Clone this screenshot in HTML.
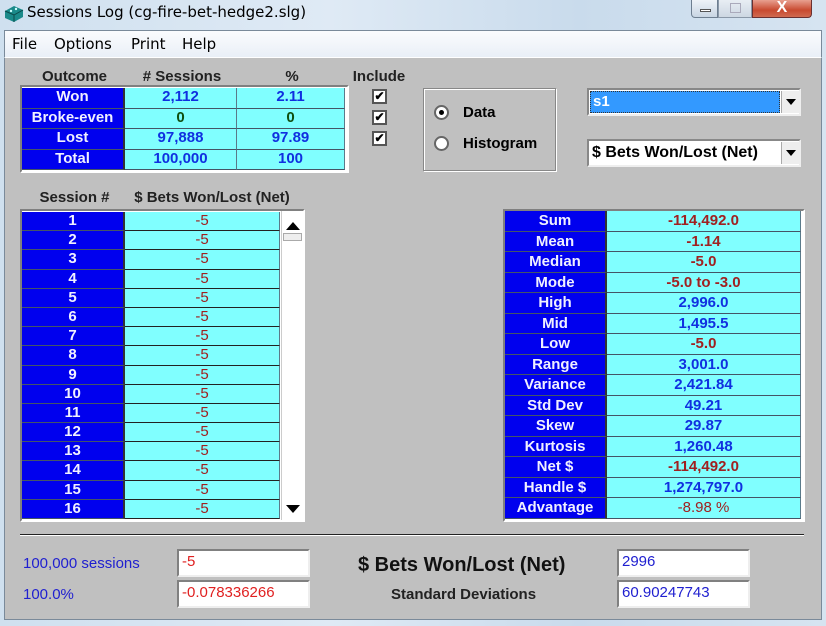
<!DOCTYPE html>
<html><head><meta charset="utf-8"><style>
*{margin:0;padding:0;box-sizing:border-box}
body{width:826px;height:626px;overflow:hidden;background:linear-gradient(90deg,#cfe0ef,#dfeaf5 40%,#c9dbec 70%,#d6e4f1);font-family:"Liberation Sans",Arial,sans-serif;position:relative}
.a{position:absolute}
.title{left:27px;top:3px;color:#000;font-family:"DejaVu Sans","Liberation Sans",sans-serif;font-size:15px}
.menu{left:4px;top:30px;width:818px;height:27px;background:linear-gradient(#fbfcfe,#e9eff7);border:1px solid #7a8a9a;border-bottom:none}
.menu span{position:absolute;top:4px;font-family:"DejaVu Sans","Liberation Sans",sans-serif;font-size:15px}
.content{left:4px;top:57px;width:818px;height:563px;background:#c0c0c0;border:1px solid #7a8a9a;border-top:1px solid #fff}
.b{font-weight:bold;font-size:15px}
.hdr{font-weight:bold;font-size:15px;color:#222;text-align:center}
.tbl{background:#fff;border:2px solid #808080;border-right-color:#fff;border-bottom-color:#fff}
.row{position:absolute;left:0;display:flex}
.lab{background:#0000ee;color:#f0f0ff;text-align:center;font-weight:bold;font-size:15px;border-right:2px solid #333;border-bottom:1px solid #445566}
.val{background:#80ffff;text-align:center;font-weight:bold;font-size:15px;border-bottom:1px solid #445566;border-right:1px solid #5a7a8a}
.s .val{border-bottom:1px solid #222}
.blue{color:#1030e0}.red{color:#a02020}.grn{color:#105010}
.cb{width:15px;height:15px;background:#fff;border:2px solid #555;font-size:12px;line-height:11px;text-align:center;font-weight:bold}
.inp{background:#fff;border:2px solid #808080;border-right-color:#eee;border-bottom-color:#eee;font-size:15px;padding:2px 3px}
.up{width:0;height:0;border-left:7px solid transparent;border-right:7px solid transparent;border-bottom:8px solid #000}
.dn{width:0;height:0;border-left:7px solid transparent;border-right:7px solid transparent;border-top:8px solid #000}
.dd{width:0;height:0;border-left:5px solid transparent;border-right:5px solid transparent;border-top:6px solid #000}
</style></head><body>
<svg class="a" style="left:3px;top:3px" width="22" height="20" viewBox="0 0 22 20"><path d="M2 8 L11 3 L20 7 L20 14 L11 19 L2 15Z" fill="#1a8a8a"/><path d="M2 8 L11 12 L20 7 M11 12 L11 19" stroke="#0a4a4a" fill="none"/><circle cx="8" cy="8" r="1.2" fill="#cff"/><circle cx="13" cy="6" r="1.2" fill="#cff"/></svg>
<div class="a title">Sessions Log (cg-fire-bet-hedge2.slg)</div>
<div class="a" style="left:691px;top:0;width:27px;height:18px;border:1px solid #6d7e90;border-top:none;border-radius:0 0 0 4px;background:linear-gradient(#eef3f8,#c8d5e3)"><div class="a" style="left:8px;top:9px;width:11px;height:3px;border:1px solid #555;background:#fff"></div></div>
<div class="a" style="left:718px;top:0;width:34px;height:18px;border:1px solid #8a98a8;border-top:none;background:linear-gradient(#e8eef4,#cdd7e2)"><div class="a" style="left:11px;top:3px;width:11px;height:10px;border:1px solid #aab"></div></div>
<div class="a" style="left:752px;top:0;width:60px;height:18px;border:1px solid #6a3030;border-top:none;border-radius:0 0 4px 0;background:linear-gradient(#e8a090,#c84a30 60%,#d06a50);color:#fff;text-align:center;font-weight:bold;font-size:16px;line-height:16px">X</div>
<div class="a menu"><span style="left:7px">File</span><span style="left:49px">Options</span><span style="left:126px">Print</span><span style="left:177px">Help</span></div>
<div class="a content"></div>

<div class="a hdr" style="left:23px;top:68px;width:103px">Outcome</div>
<div class="a hdr" style="left:126px;top:68px;width:112px"># Sessions</div>
<div class="a hdr" style="left:238px;top:68px;width:108px">%</div>
<div class="a hdr" style="left:348px;top:68px;width:62px">Include</div>
<div class="a tbl" style="left:20px;top:85px;width:329px;height:88px">
 <div class="row" style="top:1px"><div class="lab" style="width:103px;height:21px">Won</div><div class="val blue" style="width:112px;height:21px">2,112</div><div class="val blue" style="width:108px;height:21px">2.11</div></div>
 <div class="row" style="top:22px"><div class="lab" style="width:103px;height:20px">Broke-even</div><div class="val grn" style="width:112px;height:20px">0</div><div class="val grn" style="width:108px;height:20px">0</div></div>
 <div class="row" style="top:42px"><div class="lab" style="width:103px;height:21px">Lost</div><div class="val blue" style="width:112px;height:21px">97,888</div><div class="val blue" style="width:108px;height:21px">97.89</div></div>
 <div class="row" style="top:63px"><div class="lab" style="width:103px;height:20px">Total</div><div class="val blue" style="width:112px;height:20px">100,000</div><div class="val blue" style="width:108px;height:20px">100</div></div>
</div>
<div class="a cb" style="left:372px;top:89px">✔</div>
<div class="a cb" style="left:372px;top:110px">✔</div>
<div class="a cb" style="left:372px;top:131px">✔</div>

<div class="a" style="left:423px;top:88px;width:133px;height:83px;border:1px solid #888;box-shadow:1px 1px 0 #fff inset,1px 1px 0 #fff"></div>
<div class="a" style="left:434px;top:105px;width:15px;height:15px;border-radius:50%;background:#fff;border:2px solid #666"><div class="a" style="left:3px;top:3px;width:5px;height:5px;border-radius:50%;background:#000"></div></div>
<div class="a b" style="left:463px;top:104px">Data</div>
<div class="a" style="left:434px;top:136px;width:15px;height:15px;border-radius:50%;background:#fff;border:2px solid #666"></div>
<div class="a b" style="left:463px;top:135px">Histogram</div>

<div class="a" style="left:587px;top:88px;width:214px;height:28px;border:2px solid #888;border-right-color:#eee;border-bottom-color:#eee;background:#fff"><div class="a" style="left:1px;top:1px;width:190px;height:22px;background:#3399ff;border:1px dotted #333;color:#fff;font-weight:bold;font-size:15px;padding:1px 2px">s1</div><div class="a" style="left:192px;top:1px;width:18px;height:22px;background:#eee;border-left:1px solid #aaa"><div class="a dd" style="left:4px;top:8px"></div></div></div>
<div class="a" style="left:587px;top:139px;width:214px;height:28px;border:2px solid #888;border-right-color:#eee;border-bottom-color:#eee;background:#fff"><div class="a b" style="left:3px;top:3px;font-size:16px">$ Bets Won/Lost (Net)</div><div class="a" style="left:192px;top:1px;width:18px;height:22px;background:#eee;border-left:1px solid #aaa"><div class="a dd" style="left:4px;top:8px"></div></div></div>

<div class="a hdr" style="left:23px;top:189px;width:103px">Session #</div>
<div class="a hdr" style="left:126px;top:189px;width:172px">$ Bets Won/Lost (Net)</div>
<div class="a tbl s" style="left:20px;top:209px;width:285px;height:313px;background:#fff">
<div class="row" style="top:1px;flex-direction:column;line-height:18px">
<div style="display:flex"><div class="lab" style="width:103px;height:19.2px">1</div><div class="val red" style="width:155px;height:19.2px;font-weight:normal">-5</div></div>
<div style="display:flex"><div class="lab" style="width:103px;height:19.2px">2</div><div class="val red" style="width:155px;height:19.2px;font-weight:normal">-5</div></div>
<div style="display:flex"><div class="lab" style="width:103px;height:19.2px">3</div><div class="val red" style="width:155px;height:19.2px;font-weight:normal">-5</div></div>
<div style="display:flex"><div class="lab" style="width:103px;height:19.2px">4</div><div class="val red" style="width:155px;height:19.2px;font-weight:normal">-5</div></div>
<div style="display:flex"><div class="lab" style="width:103px;height:19.2px">5</div><div class="val red" style="width:155px;height:19.2px;font-weight:normal">-5</div></div>
<div style="display:flex"><div class="lab" style="width:103px;height:19.2px">6</div><div class="val red" style="width:155px;height:19.2px;font-weight:normal">-5</div></div>
<div style="display:flex"><div class="lab" style="width:103px;height:19.2px">7</div><div class="val red" style="width:155px;height:19.2px;font-weight:normal">-5</div></div>
<div style="display:flex"><div class="lab" style="width:103px;height:19.2px">8</div><div class="val red" style="width:155px;height:19.2px;font-weight:normal">-5</div></div>
<div style="display:flex"><div class="lab" style="width:103px;height:19.2px">9</div><div class="val red" style="width:155px;height:19.2px;font-weight:normal">-5</div></div>
<div style="display:flex"><div class="lab" style="width:103px;height:19.2px">10</div><div class="val red" style="width:155px;height:19.2px;font-weight:normal">-5</div></div>
<div style="display:flex"><div class="lab" style="width:103px;height:19.2px">11</div><div class="val red" style="width:155px;height:19.2px;font-weight:normal">-5</div></div>
<div style="display:flex"><div class="lab" style="width:103px;height:19.2px">12</div><div class="val red" style="width:155px;height:19.2px;font-weight:normal">-5</div></div>
<div style="display:flex"><div class="lab" style="width:103px;height:19.2px">13</div><div class="val red" style="width:155px;height:19.2px;font-weight:normal">-5</div></div>
<div style="display:flex"><div class="lab" style="width:103px;height:19.2px">14</div><div class="val red" style="width:155px;height:19.2px;font-weight:normal">-5</div></div>
<div style="display:flex"><div class="lab" style="width:103px;height:19.2px">15</div><div class="val red" style="width:155px;height:19.2px;font-weight:normal">-5</div></div>
<div style="display:flex"><div class="lab" style="width:103px;height:19.2px">16</div><div class="val red" style="width:155px;height:19.2px;font-weight:normal">-5</div></div>
</div>
<div class="a" style="left:259px;top:0;width:22px;height:309px;background:#fff;border-left:1px solid #ccc"></div>
<div class="a up" style="left:264px;top:11px"></div>
<div class="a" style="left:261px;top:22px;width:19px;height:8px;border:1px solid #aaa;background:#eee"></div>
<div class="a dn" style="left:264px;top:294px"></div>
</div>

<div class="a tbl" style="left:503px;top:209px;width:302px;height:313px">
<div class="row" style="top:0;flex-direction:column;line-height:19px">
<div style="display:flex"><div class="lab" style="width:102px;height:20.5px">Sum</div><div class="val red" style="width:194px;height:20.5px">-114,492.0</div></div>
<div style="display:flex"><div class="lab" style="width:102px;height:20.5px">Mean</div><div class="val red" style="width:194px;height:20.5px">-1.14</div></div>
<div style="display:flex"><div class="lab" style="width:102px;height:20.5px">Median</div><div class="val red" style="width:194px;height:20.5px">-5.0</div></div>
<div style="display:flex"><div class="lab" style="width:102px;height:20.5px">Mode</div><div class="val red" style="width:194px;height:20.5px">-5.0 to -3.0</div></div>
<div style="display:flex"><div class="lab" style="width:102px;height:20.5px">High</div><div class="val blue" style="width:194px;height:20.5px">2,996.0</div></div>
<div style="display:flex"><div class="lab" style="width:102px;height:20.5px">Mid</div><div class="val blue" style="width:194px;height:20.5px">1,495.5</div></div>
<div style="display:flex"><div class="lab" style="width:102px;height:20.5px">Low</div><div class="val red" style="width:194px;height:20.5px">-5.0</div></div>
<div style="display:flex"><div class="lab" style="width:102px;height:20.5px">Range</div><div class="val blue" style="width:194px;height:20.5px">3,001.0</div></div>
<div style="display:flex"><div class="lab" style="width:102px;height:20.5px">Variance</div><div class="val blue" style="width:194px;height:20.5px">2,421.84</div></div>
<div style="display:flex"><div class="lab" style="width:102px;height:20.5px">Std Dev</div><div class="val blue" style="width:194px;height:20.5px">49.21</div></div>
<div style="display:flex"><div class="lab" style="width:102px;height:20.5px">Skew</div><div class="val blue" style="width:194px;height:20.5px">29.87</div></div>
<div style="display:flex"><div class="lab" style="width:102px;height:20.5px">Kurtosis</div><div class="val blue" style="width:194px;height:20.5px">1,260.48</div></div>
<div style="display:flex"><div class="lab" style="width:102px;height:20.5px">Net $</div><div class="val red" style="width:194px;height:20.5px">-114,492.0</div></div>
<div style="display:flex"><div class="lab" style="width:102px;height:20.5px">Handle $</div><div class="val blue" style="width:194px;height:20.5px">1,274,797.0</div></div>
<div style="display:flex"><div class="lab" style="width:102px;height:20.5px">Advantage</div><div class="val red" style="width:194px;height:20.5px;font-weight:normal">-8.98 %</div></div>
</div></div>

<div class="a" style="left:20px;top:534px;width:784px;height:2px;background:#222;border-bottom:1px solid #fff"></div>
<div class="a" style="left:23px;top:555px;color:#2020d0;font-size:15px">100,000 sessions</div>
<div class="a" style="left:23px;top:586px;color:#2020d0;font-size:15px">100.0%</div>
<div class="a inp" style="left:177px;top:549px;width:133px;height:28px;color:#e02020">-5</div>
<div class="a inp" style="left:177px;top:580px;width:133px;height:28px;color:#e02020">-0.078336266</div>
<div class="a" style="left:358px;top:554px;font-size:20px;font-weight:bold;color:#111">$ Bets Won/Lost (Net)</div>
<div class="a" style="left:391px;top:586px;font-size:15px;font-weight:bold;color:#222">Standard Deviations</div>
<div class="a inp" style="left:617px;top:549px;width:133px;height:28px;color:#2020d0">2996</div>
<div class="a inp" style="left:617px;top:580px;width:133px;height:28px;color:#2020d0">60.90247743</div>
</body></html>
